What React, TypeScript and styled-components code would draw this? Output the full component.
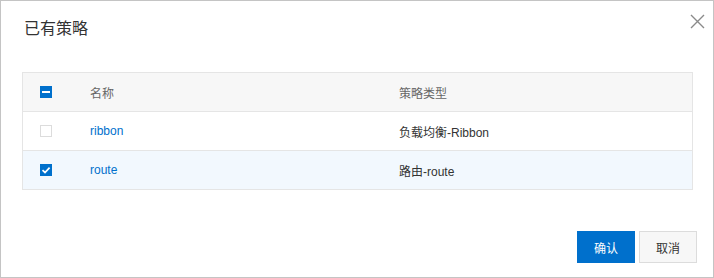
import React, { useState } from "react";
import styled, { createGlobalStyle } from "styled-components";

const GlobalStyle = createGlobalStyle`
  html, body {
    margin: 0;
    padding: 0;
    background: #fff;
  }
  body {
    font-family: "Liberation Sans", Arial, "Noto Sans CJK SC", sans-serif;
    font-size: 12px;
    color: #333;
  }
`;

const Dialog = styled.div`
  width: 714px;
  height: 278px;
  box-sizing: border-box;
  border: 1px solid #c4c4c4;
  background: #fff;
  display: flex;
  flex-direction: column;
  position: relative;
`;

const Header = styled.div`
  height: 71px;
  box-sizing: border-box;
  padding: 16px 23px 0;
`;

const Title = styled.h3`
  margin: 0;
  font-size: 16px;
  line-height: 20px;
  font-weight: normal;
  color: #333;
  font-family: "Noto Sans CJK SC", sans-serif;
`;

const CloseButton = styled.button`
  position: absolute;
  top: 12px;
  right: 8px;
  width: 16px;
  height: 16px;
  padding: 0;
  border: 0;
  background: transparent;
  cursor: pointer;
  display: flex;
  align-items: center;
  justify-content: center;
`;

const Table = styled.div`
  margin: 0 20px 0 21px;
  border: 1px solid #e5e5e5;
  border-bottom: 0;
`;

const Row = styled.div<{ $head?: boolean; $selected?: boolean }>`
  display: grid;
  grid-template-columns: 52px 309px 1fr;
  height: 38px;
  border-bottom: 1px solid #e5e5e5;
  background: ${(p) => (p.$head ? "#f7f7f7" : p.$selected ? "#f2f8fe" : "#fff")};
  color: ${(p) => (p.$head ? "#666" : "#333")};
`;

const Cell = styled.div`
  display: flex;
  align-items: center;
  padding-left: 15px;
  font-family: "Liberation Sans", Arial, "Noto Sans CJK SC", sans-serif;
  font-size: 12px;
`;

const CheckCell = styled(Cell)`
  padding-left: 17px;
`;

const Link = styled.a`
  color: #0070cc;
  text-decoration: none;
  cursor: pointer;
`;

const Box = styled.span<{ $on?: boolean }>`
  width: 12px;
  height: 12px;
  box-sizing: border-box;
  border: 1px solid ${(p) => (p.$on ? "#0070cc" : "#dcdcdc")};
  background: ${(p) => (p.$on ? "#0070cc" : "#fff")};
  display: flex;
  align-items: center;
  justify-content: center;
  cursor: pointer;
`;

const Footer = styled.div`
  margin-top: auto;
  display: flex;
  justify-content: flex-end;
  gap: 4px;
  padding: 0 16px 14px;
`;

const Button = styled.button<{ $primary?: boolean }>`
  width: 58px;
  height: 32px;
  box-sizing: border-box;
  font-family: "Noto Sans CJK SC", sans-serif;
  font-size: 12px;
  cursor: pointer;
  border: 1px solid ${(p) => (p.$primary ? "#0070cc" : "#dcdcdc")};
  background: ${(p) => (p.$primary ? "#0070cc" : "#f7f7f7")};
  color: ${(p) => (p.$primary ? "#fff" : "#333")};
`;

const Checkbox: React.FC<{ state: "on" | "off" | "mixed"; onClick?: () => void }> = ({
  state,
  onClick,
}) => (
  <Box $on={state !== "off"} onClick={onClick}>
    {state === "on" && (
      <svg width="10" height="10" viewBox="0 0 10 10">
        <path d="M1.5 5.2 L4 7.5 L8.6 2.6" fill="none" stroke="#fff" strokeWidth="1.7" />
      </svg>
    )}
    {state === "mixed" && (
      <svg width="10" height="10" viewBox="0 0 10 10">
        <rect x="1" y="4" width="8" height="2" fill="#fff" />
      </svg>
    )}
  </Box>
);

const rows = [
  { name: "ribbon", type: "负载均衡-Ribbon" },
  { name: "route", type: "路由-route" },
];

const App: React.FC = () => {
  const [checked, setChecked] = useState<boolean[]>([false, true]);
  const count = checked.filter(Boolean).length;
  const headState = count === 0 ? "off" : count === rows.length ? "on" : "mixed";

  return (
    <>
      <GlobalStyle />
      <Dialog>
        <Header>
          <Title>已有策略</Title>
        </Header>
        <CloseButton aria-label="close">
          <svg width="15" height="15" viewBox="0 0 15 15">
            <path d="M1 1 L14 14 M14 1 L1 14" stroke="#8a8a8a" strokeWidth="1.4" />
          </svg>
        </CloseButton>
        <Table>
          <Row $head>
            <CheckCell>
              <Checkbox
                state={headState}
                onClick={() => setChecked(rows.map(() => headState !== "on"))}
              />
            </CheckCell>
            <Cell>名称</Cell>
            <Cell>策略类型</Cell>
          </Row>
          {rows.map((r, i) => (
            <Row key={r.name} $selected={checked[i]}>
              <CheckCell>
                <Checkbox
                  state={checked[i] ? "on" : "off"}
                  onClick={() => setChecked(checked.map((c, j) => (j === i ? !c : c)))}
                />
              </CheckCell>
              <Cell>
                <Link>{r.name}</Link>
              </Cell>
              <Cell>{r.type}</Cell>
            </Row>
          ))}
        </Table>
        <Footer>
          <Button $primary>确认</Button>
          <Button>取消</Button>
        </Footer>
      </Dialog>
    </>
  );
};

export default App;
